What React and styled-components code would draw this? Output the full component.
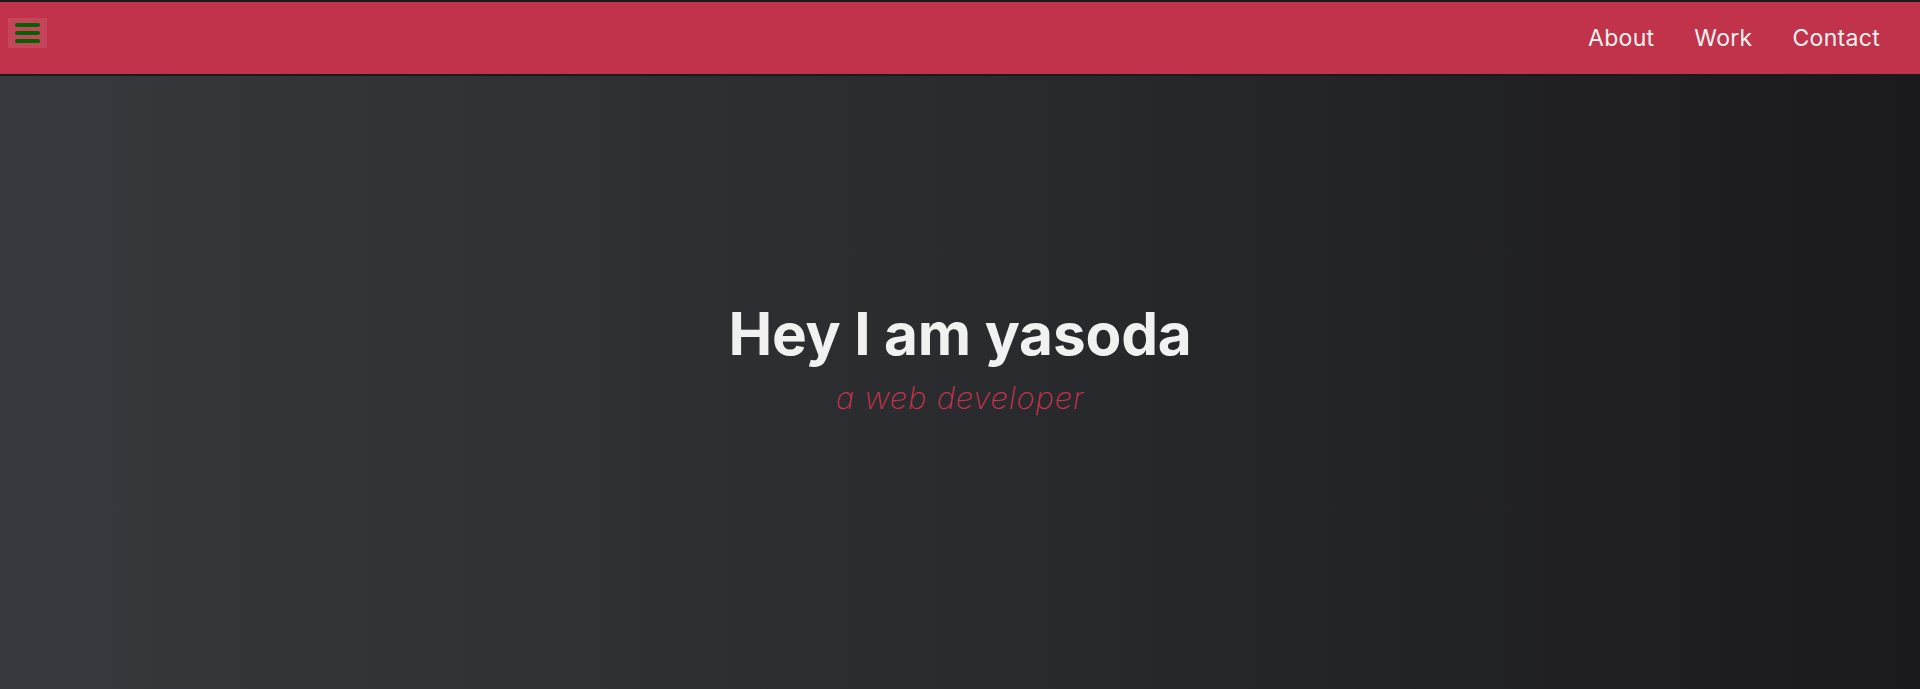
import React from 'react';
import styled, { createGlobalStyle } from 'styled-components';

const GlobalStyle = createGlobalStyle`
  * { box-sizing: border-box; }
  html, body { margin: 0; padding: 0; }
  body {
    font-family: "Inter", "Noto Sans", sans-serif;
    background: #1b1b1d;
  }
`;

const Page = styled.div`
  min-height: 689px;
  display: flex;
  flex-direction: column;
  background: linear-gradient(90deg, #36393d 0%, #2a2b2e 50%, #1a1a1c 100%);
`;

const Header = styled.header`
  height: 76px;
  display: flex;
  align-items: center;
  justify-content: space-between;
  background: #c0334a;
  border-top: 2px solid #1b1b1b;
  border-bottom: 2px solid #1b1b1b;
  padding: 0 40px 0 8px;
`;

const MenuButton = styled.button`
  width: 39px;
  height: 30px;
  margin-top: -10px;
  border: none;
  padding: 0;
  background: rgba(255, 255, 255, 0.09);
  display: flex;
  flex-direction: column;
  align-items: center;
  justify-content: center;
  gap: 4px;
  cursor: pointer;
`;

const Bar = styled.span`
  display: block;
  width: 25px;
  height: 4px;
  border-radius: 2px;
  background: #006400;
`;

const Nav = styled.nav`
  display: flex;
  align-items: center;
  gap: 40px;
`;

const NavLink = styled.a`
  color: #f2f2f2;
  font-family: "Inter", "Noto Sans", sans-serif;
  font-size: 23px;
  letter-spacing: 0.3px;
  text-decoration: none;
`;

const Hero = styled.main`
  flex: 1;
  display: flex;
  flex-direction: column;
  align-items: center;
  padding-top: 229px;
`;

const Title = styled.h1`
  margin: 0;
  color: #f1f1f1;
  font-family: "Inter", "Noto Sans", sans-serif;
  font-weight: 700;
  font-size: 58.5px;
  letter-spacing: -0.2px;
  line-height: 1;
`;

const Subtitle = styled.p`
  margin: 18px 0 0;
  color: #c2334b;
  font-family: "Inter", "Noto Sans", sans-serif;
  font-weight: 200;
  font-style: italic;
  font-size: 31px;
  letter-spacing: 0.8px;
  line-height: 1;
`;

export default function App() {
  return (
    <>
      <GlobalStyle />
      <Page>
        <Header>
          <MenuButton aria-label="menu">
            <Bar />
            <Bar />
            <Bar />
          </MenuButton>
          <Nav>
            <NavLink href="#about">About</NavLink>
            <NavLink href="#work">Work</NavLink>
            <NavLink href="#contact">Contact</NavLink>
          </Nav>
        </Header>
        <Hero>
          <Title>Hey I am yasoda</Title>
          <Subtitle>a web developer</Subtitle>
        </Hero>
      </Page>
    </>
  );
}
